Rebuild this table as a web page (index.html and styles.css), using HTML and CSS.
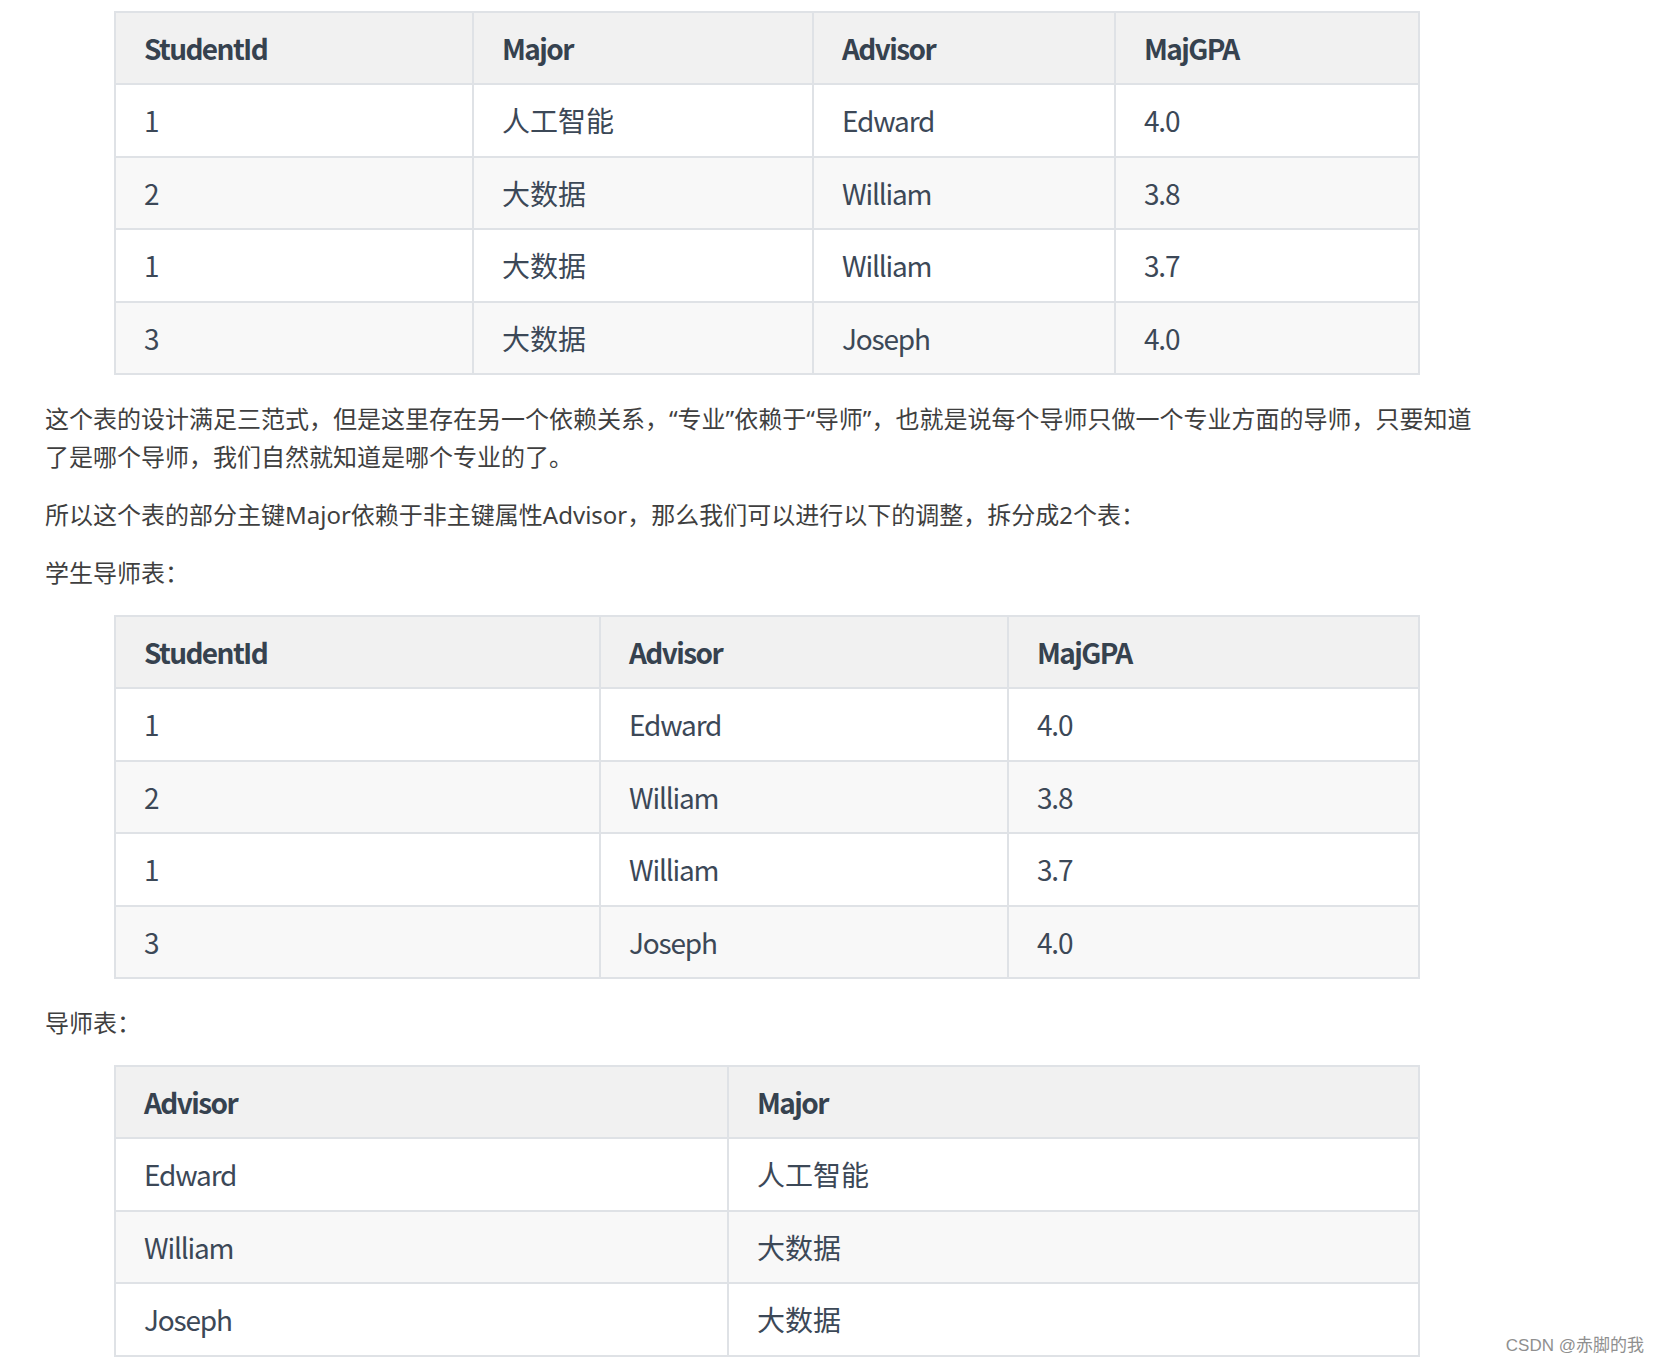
FILE: index.html
```html
<!DOCTYPE html>
<html lang="zh-CN">
<head>
<meta charset="utf-8">
<title>范式</title>
<link rel="stylesheet" href="styles.css">
</head>
<body>
<div class="page">
  <div class="article">
    <table class="tbl first">
      <colgroup><col class="w358"><col class="w340"><col class="w302"><col class="w304"></colgroup>
      <thead><tr><th>StudentId</th><th>Major</th><th>Advisor</th><th>MajGPA</th></tr></thead>
      <tbody>
        <tr><td>1</td><td class="cjk">人工智能</td><td>Edward</td><td>4.0</td></tr>
        <tr><td>2</td><td class="cjk">大数据</td><td>William</td><td>3.8</td></tr>
        <tr><td>1</td><td class="cjk">大数据</td><td>William</td><td>3.7</td></tr>
        <tr><td>3</td><td class="cjk">大数据</td><td>Joseph</td><td>4.0</td></tr>
      </tbody>
    </table>
    <p>这个表的设计满足三范式，但是这里存在另一个依赖关系，“专业”依赖于“导师”，也就是说每个导师只做一个专业方面的导师，只要知道了是哪个导师，我们自然就知道是哪个专业的了。</p>
    <p>所以这个表的部分主键Major依赖于非主键属性Advisor，那么我们可以进行以下的调整，拆分成2个表：</p>
    <p>学生导师表：</p>
    <table class="tbl">
      <colgroup><col class="w485"><col class="w408"><col class="w411"></colgroup>
      <thead><tr><th>StudentId</th><th>Advisor</th><th>MajGPA</th></tr></thead>
      <tbody>
        <tr><td>1</td><td>Edward</td><td>4.0</td></tr>
        <tr><td>2</td><td>William</td><td>3.8</td></tr>
        <tr><td>1</td><td>William</td><td>3.7</td></tr>
        <tr><td>3</td><td>Joseph</td><td>4.0</td></tr>
      </tbody>
    </table>
    <p>导师表：</p>
    <table class="tbl">
      <colgroup><col class="w613"><col class="w691"></colgroup>
      <thead><tr><th>Advisor</th><th>Major</th></tr></thead>
      <tbody>
        <tr><td>Edward</td><td class="cjk">人工智能</td></tr>
        <tr><td>William</td><td class="cjk">大数据</td></tr>
        <tr><td>Joseph</td><td class="cjk">大数据</td></tr>
      </tbody>
    </table>
  </div>
  <div class="watermark">CSDN @赤脚的我</div>
</div>
</body>
</html>
```

FILE: styles.css
```css
html, body {
  margin: 0;
  padding: 0;
  background: #ffffff;
}

.page {
  position: relative;
  height: 1363px;
  overflow: hidden;
}

.article {
  width: 1440px;
  padding: 11px 0 0 45px;
  font-family: "Noto Sans", "Noto Sans CJK SC", sans-serif;
  color: #3f3f3f;
}

.article p {
  margin: 0 0 20px 0;
  font-size: 24px;
  line-height: 38px;
}

.tbl {
  border-collapse: collapse;
  table-layout: fixed;
  width: 1304px;
  margin: 23px 0 25px 69px;
  font-family: "Noto Sans CJK SC", sans-serif;
  font-size: 28px;
  color: #3c4857;
}

.tbl.first {
  margin-top: 0;
}

.tbl th,
.tbl td {
  border: 2px solid #dfe2e6;
  padding: 16px 28px;
  line-height: 38.4px;
  text-align: left;
  vertical-align: middle;
  white-space: nowrap;
}

.tbl th {
  background: #f1f1f1;
  font-weight: 600;
  color: #36424f;
  letter-spacing: -1.6px;
}

.tbl td {
  font-weight: 400;
  letter-spacing: -1.2px;
}

.tbl td.cjk {
  letter-spacing: 0;
}

.tbl tbody tr:nth-child(odd) td {
  background: #ffffff;
}

.tbl tbody tr:nth-child(even) td {
  background: #f8f8f8;
}

.w358 { width: 358px; }
.w340 { width: 340px; }
.w302 { width: 302px; }
.w304 { width: 304px; }
.w485 { width: 485px; }
.w408 { width: 408px; }
.w411 { width: 411px; }
.w613 { width: 613px; }
.w691 { width: 691px; }

.watermark {
  position: absolute;
  right: 16px;
  bottom: 7px;
  font-family: "Liberation Sans", "Noto Sans CJK SC", sans-serif;
  font-size: 17px;
  line-height: 20px;
  color: #8f8f8f;
  text-shadow: 0 0 2px #ffffff;
}
```
